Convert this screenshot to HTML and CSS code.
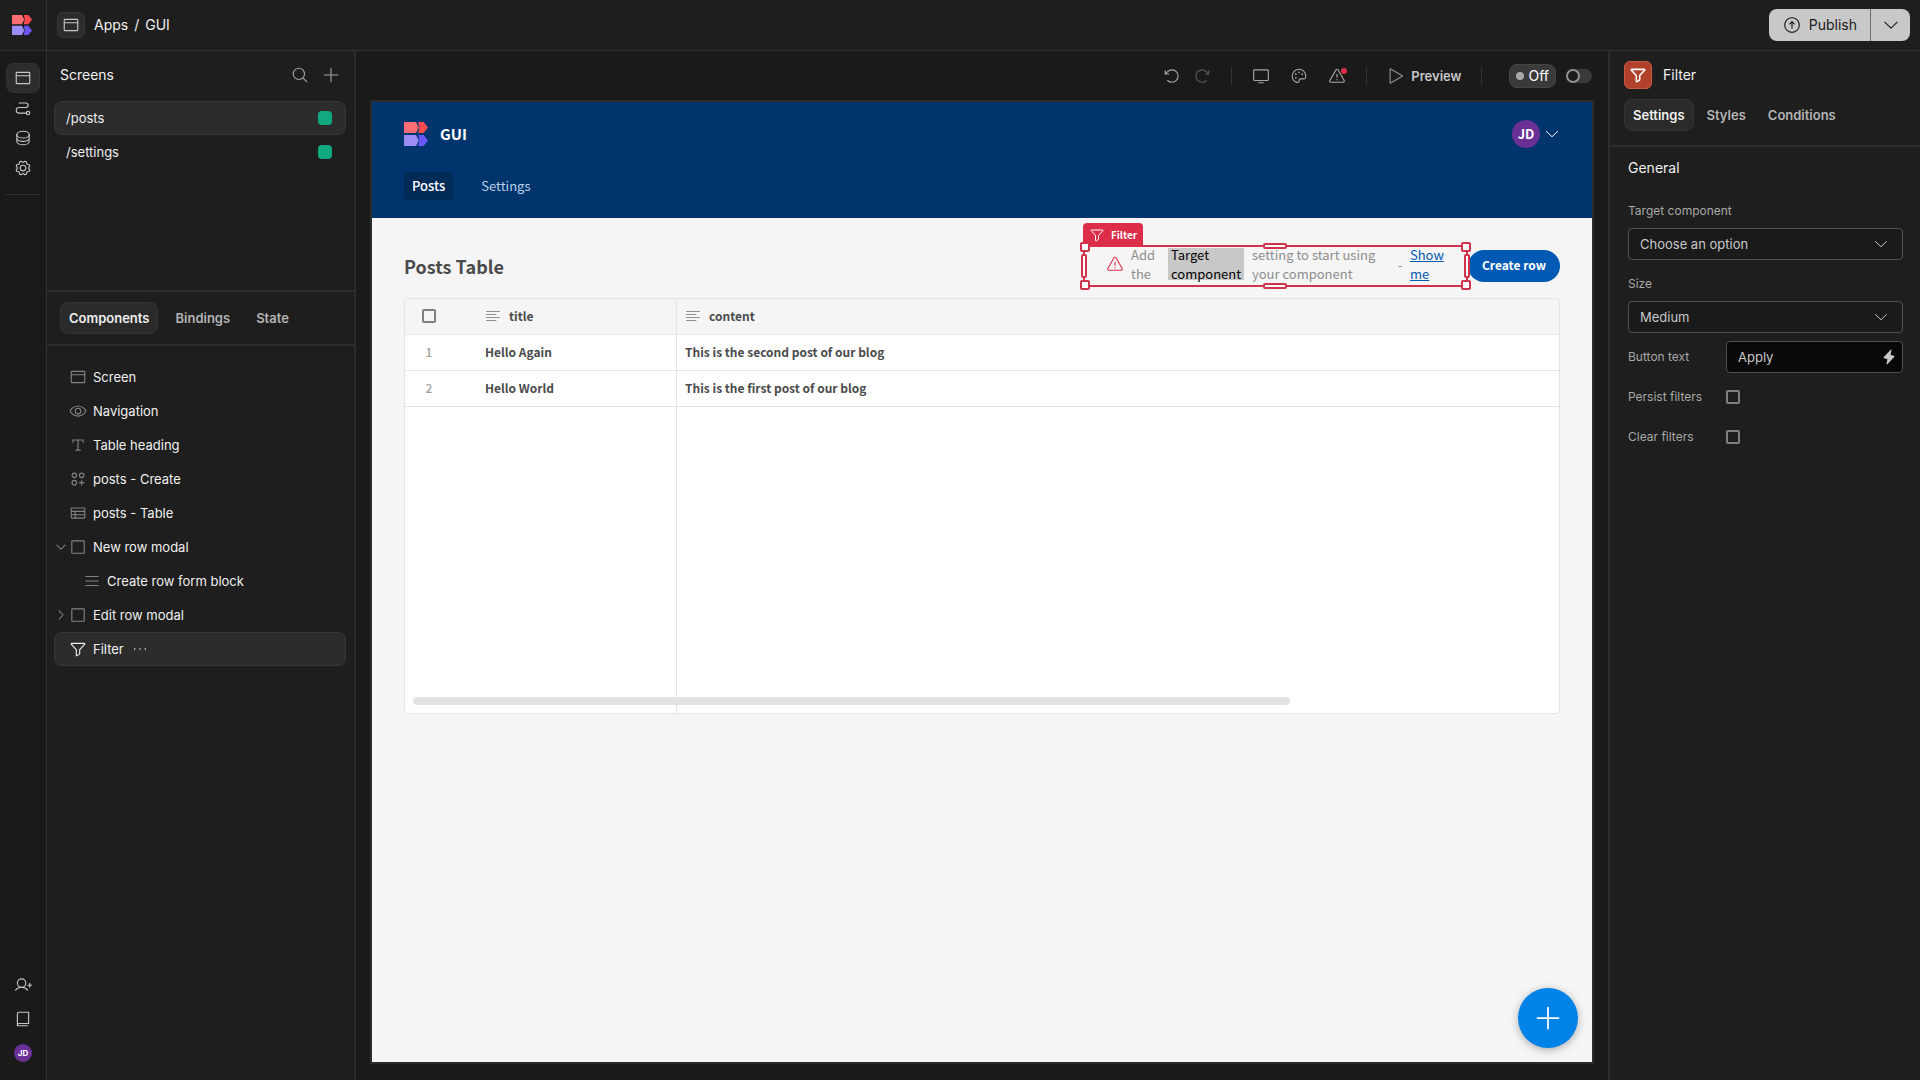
FILE: index.html
```html
<!DOCTYPE html>
<html lang="en">
<head>
  <meta charset="UTF-8" />
  <meta name="viewport" content="width=device-width, initial-scale=1.0"/>
  <title>GUI - Apps</title>
  <link rel="stylesheet" href="styles.css">
</head>
<body>

  <!-- Icon sprite -->
  <svg class="sprite" aria-hidden="true">
    <symbol id="i-logo" viewBox="0 0 22 24" preserveAspectRatio="none">
      <path fill="#ff6e73" stroke="none" d="M0 0h11l2.500 5.500L11 11H0z"/>
      <path fill="#ff4a50" stroke="none" d="M13 0h5l4 5.500-4 5.500h-5l1-5.500z"/>
      <path fill="#9b8df5" stroke="none" d="M0 13h11l2.500 5.500L11 24H0z"/>
      <path fill="#6a56f5" stroke="none" d="M13 13h5l4 5.500-4 5.500h-5l1-5.500z"/>
    </symbol>
    <symbol id="i-browser" viewBox="0 0 256 256"><rect x="32" y="48" width="192" height="160" rx="8"/><path d="M32 96h192"/></symbol>
    <symbol id="i-path" viewBox="0 0 256 256"><circle cx="200" cy="200" r="24"/><path d="M72 56h96a32 32 0 0 1 0 64H72a40 40 0 0 0 0 80h104"/></symbol>
    <symbol id="i-database" viewBox="0 0 256 256"><ellipse cx="128" cy="80" rx="88" ry="48"/><path d="M40 80v48c0 26.500 39.400 48 88 48s88-21.500 88-48V80M40 128v48c0 26.500 39.400 48 88 48s88-21.500 88-48v-48"/></symbol>
    <symbol id="i-gear" viewBox="0 0 256 256"><circle cx="128" cy="128" r="40"/><path d="M41.430 178.090A99.140 99.140 0 0 1 31.360 153.800l16.780-21a81.590 81.590 0 0 1 0-9.640l-16.770-21a99.430 99.430 0 0 1 10.050-24.300l26.710-3a81 81 0 0 1 6.810-6.810l3-26.700A99.140 99.140 0 0 1 102.200 31.360l21 16.780a81.590 81.590 0 0 1 9.640 0l21-16.770a99.430 99.430 0 0 1 24.300 10.050l3 26.710a81 81 0 0 1 6.810 6.810l26.700 3a99.140 99.140 0 0 1 10.070 24.290l-16.780 21a81.590 81.590 0 0 1 0 9.640l16.770 21a99.430 99.430 0 0 1-10 24.300l-26.710 3a81 81 0 0 1-6.810 6.810l-3 26.700a99.140 99.140 0 0 1-24.290 10.070l-21-16.780a81.590 81.590 0 0 1-9.640 0l-21 16.770a99.430 99.430 0 0 1-24.300-10l-3-26.710a81 81 0 0 1-6.810-6.810Z"/></symbol>
    <symbol id="i-search" viewBox="0 0 256 256"><circle cx="112" cy="112" r="80"/><path d="M168.570 168.570 224 224"/></symbol>
    <symbol id="i-plus" viewBox="0 0 256 256"><path d="M32 128h192M128 32v192"/></symbol>
    <symbol id="i-eye" viewBox="0 0 256 256"><path d="M128 56C48 56 16 128 16 128s32 72 112 72 112-72 112-72S208 56 128 56Z"/><circle cx="128" cy="128" r="40"/></symbol>
    <symbol id="i-text" viewBox="0 0 256 256"><path d="M56 88V56h144v32M128 56v144M96 200h64"/></symbol>
    <symbol id="i-circles" viewBox="0 0 256 256"><circle cx="76" cy="76" r="32"/><circle cx="180" cy="76" r="32"/><circle cx="76" cy="180" r="32"/><path d="M180 148v64M148 180h64"/></symbol>
    <symbol id="i-table" viewBox="0 0 256 256"><path d="M32 56h192v136a8 8 0 0 1-8 8H40a8 8 0 0 1-8-8ZM32 104h192M32 152h192M88 104v96"/></symbol>
    <symbol id="i-square" viewBox="0 0 256 256"><rect x="40" y="40" width="176" height="176" rx="6"/></symbol>
    <symbol id="i-list" viewBox="0 0 256 256"><path d="M40 64h176M40 128h176M40 192h176"/></symbol>
    <symbol id="i-funnel" viewBox="0 0 256 256"><path d="M34.100 61.380A8 8 0 0 1 40 48h176a8 8 0 0 1 5.920 13.380L152 136v58.130a8 8 0 0 1-3.560 6.660l-32 21.330A8 8 0 0 1 104 215.460V136Z"/></symbol>
    <symbol id="i-dots" viewBox="0 0 256 256"><g fill="currentColor" stroke="none"><circle cx="44" cy="128" r="12"/><circle cx="128" cy="128" r="12"/><circle cx="212" cy="128" r="12"/></g></symbol>
    <symbol id="i-undo" viewBox="0 0 256 256"><path d="M80 100H32V52M66 192A88 88 0 1 0 65.770 65.770L32 100"/></symbol>
    <symbol id="i-redo" viewBox="0 0 256 256"><path d="M176 100h48V52M190 192a88 88 0 1 1 .230-126.230L224 100"/></symbol>
    <symbol id="i-desktop" viewBox="0 0 256 256"><rect x="24" y="40" width="208" height="152" rx="12"/><path d="M96 224h64"/></symbol>
    <symbol id="i-palette" viewBox="0 0 256 256"><path d="M128 192a24 24 0 0 1 24-24h46.210a24 24 0 0 0 23.410-18.650A96.480 96.480 0 0 0 224 127.170c-.450-52.820-44.160-95.700-97-95.170a96 96 0 0 0-95 97c.5 41 27 77 64.300 90A24 24 0 0 0 128 192Z"/><g fill="currentColor" stroke="none"><circle cx="128" cy="76" r="12"/><circle cx="83" cy="102" r="12"/><circle cx="83" cy="154" r="12"/><circle cx="173" cy="102" r="12"/></g></symbol>
    <symbol id="i-warning" viewBox="0 0 256 256"><path d="M142.410 40.220l87.460 151.870C236 202.790 228.080 216 215.460 216H40.540C27.920 216 20 202.790 26.130 192.090L113.590 40.220c6.300-10.960 22.520-10.960 28.820 0ZM128 104v40"/><circle cx="128" cy="180" r="10" fill="currentColor" stroke="none"/></symbol>
    <symbol id="i-play" viewBox="0 0 256 256"><path d="M44 34v188a6 6 0 0 0 9 5l164-94a6 6 0 0 0 0-10L53 29a6 6 0 0 0-9 5Z"/></symbol>
    <symbol id="i-down" viewBox="0 0 256 256"><path d="m216 88-88 84-88-84"/></symbol>
    <symbol id="i-right" viewBox="0 0 256 256"><path d="m88 40 84 88-84 88"/></symbol>
    <symbol id="i-publish" viewBox="0 0 256 256"><circle cx="128" cy="128" r="104"/><path d="m96 112 32-32 32 32M128 172V80"/></symbol>
    <symbol id="i-user-plus" viewBox="0 0 256 256"><circle cx="108" cy="100" r="60"/><path d="M22 200c20-25 49-40 86-40s66 15 86 40M224 104v56M196 132h56"/></symbol>
    <symbol id="i-book" viewBox="0 0 256 256"><path d="M48 216a24 24 0 0 1 24-24h136V32H72a24 24 0 0 0-24 24ZM48 216v8h144"/></symbol>
    <symbol id="i-bolt" viewBox="0 0 256 256"><path fill="currentColor" stroke="none" d="m213.850 125.460-112 120a8 8 0 0 1-13.690-7l14.660-73.330-57.630-21.640a8 8 0 0 1-3-13l112-120a8 8 0 0 1 13.690 7L153.180 90.900l57.630 21.610a8 8 0 0 1 3 12.950Z"/></symbol>
    <symbol id="i-lines" viewBox="0 0 256 256"><path d="M24 56h208M24 104h152M24 152h208M24 200h152"/></symbol>
  </svg>

  <!-- Left rail -->
  <nav class="rail" aria-label="Main">
    <a class="rail-logo" href="#" aria-label="Home"><svg class="logo-small"><use href="#i-logo"/></svg></a>
    <div class="rail-items">
      <button class="rail-btn active" aria-label="Design"><svg class="icon"><use href="#i-browser"/></svg></button>
      <button class="rail-btn" aria-label="Automations"><svg class="icon"><use href="#i-path"/></svg></button>
      <button class="rail-btn" aria-label="Data"><svg class="icon"><use href="#i-database"/></svg></button>
      <button class="rail-btn" aria-label="App settings"><svg class="icon"><use href="#i-gear"/></svg></button>
    </div>
    <div class="rail-bottom">
      <button class="rail-btn" aria-label="Invite user"><svg class="icon"><use href="#i-user-plus"/></svg></button>
      <button class="rail-btn" aria-label="Docs"><svg class="icon"><use href="#i-book"/></svg></button>
      <button class="avatar small">JD</button>
    </div>
  </nav>

  <div class="app">
    <header class="topbar">
      <button class="app-icon" aria-label="App"><svg class="icon"><use href="#i-browser"/></svg></button>
      <div class="breadcrumbs">
        <a href="#">Apps</a>
        <span>/</span>
        <a href="#">GUI</a>
      </div>
      <div class="publish">
        <button class="publish-main"><svg class="icon"><use href="#i-publish"/></svg>Publish</button>
        <button class="publish-more" aria-label="Publish options"><svg class="icon"><use href="#i-down"/></svg></button>
      </div>
    </header>

    <div class="workspace">
      <!-- Screens and components -->
      <aside class="side">
        <section class="screens">
          <div class="screens-head">
            <h2>Screens</h2>
            <button aria-label="Search"><svg class="icon"><use href="#i-search"/></svg></button>
            <button aria-label="Add screen"><svg class="icon"><use href="#i-plus"/></svg></button>
          </div>
          <button class="screen-row selected">/posts <span class="role"></span></button>
          <button class="screen-row">/settings <span class="role"></span></button>
        </section>

        <div class="tabs">
          <button class="tab active">Components</button>
          <button class="tab">Bindings</button>
          <button class="tab">State</button>
        </div>

        <section class="tree">
          <button class="node"><span class="arrow"></span><svg class="icon"><use href="#i-browser"/></svg>Screen</button>
          <button class="node"><span class="arrow"></span><svg class="icon"><use href="#i-eye"/></svg>Navigation</button>
          <button class="node"><span class="arrow"></span><svg class="icon"><use href="#i-text"/></svg>Table heading</button>
          <button class="node"><span class="arrow"></span><svg class="icon"><use href="#i-circles"/></svg>posts - Create</button>
          <button class="node"><span class="arrow"></span><svg class="icon"><use href="#i-table"/></svg>posts - Table</button>
          <button class="node"><svg class="arrow"><use href="#i-down"/></svg><svg class="icon"><use href="#i-square"/></svg>New row modal</button>
          <button class="node child"><span class="arrow"></span><svg class="icon"><use href="#i-list"/></svg>Create row form block</button>
          <button class="node"><svg class="arrow"><use href="#i-right"/></svg><svg class="icon"><use href="#i-square"/></svg>Edit row modal</button>
          <button class="node selected"><span class="arrow"></span><svg class="icon"><use href="#i-funnel"/></svg>Filter<svg class="more"><use href="#i-dots"/></svg></button>
        </section>
      </aside>

      <!-- Preview -->
      <main class="stage">
        <div class="toolbar">
          <div class="tool-group tight">
            <button aria-label="Undo"><svg class="icon"><use href="#i-undo"/></svg></button>
            <button aria-label="Redo" disabled><svg class="icon"><use href="#i-redo"/></svg></button>
          </div>
          <span class="sep"></span>
          <div class="tool-group">
            <button aria-label="Desktop"><svg class="icon"><use href="#i-desktop"/></svg></button>
            <button aria-label="Theme"><svg class="icon"><use href="#i-palette"/></svg></button>
            <button class="errors" aria-label="Errors"><svg class="icon"><use href="#i-warning"/></svg></button>
          </div>
          <span class="sep"></span>
          <button class="preview-btn"><svg class="icon"><use href="#i-play"/></svg>Preview</button>
          <span class="sep"></span>
          <div class="live">
            <label class="status" for="liveToggle">Off</label>
            <input type="checkbox" class="toggle" id="liveToggle">
          </div>
        </div>

        <div class="frame">
          <header class="site-head">
            <div class="site-brand">
              <svg class="logo-large"><use href="#i-logo"/></svg>
              <span class="site-title">GUI</span>
              <button class="user-menu"><span class="avatar">JD</span><svg class="icon"><use href="#i-down"/></svg></button>
            </div>
            <nav class="site-nav">
              <a class="active" href="#">Posts</a>
              <a href="#">Settings</a>
            </nav>
          </header>

          <div class="site-body">
            <div class="title-row">
              <h1>Posts Table</h1>
              <div class="selection">
                <div class="notice">
                  <svg class="icon"><use href="#i-warning"/></svg>
                  <span class="n-add">Add the</span>
                  <mark>Target component</mark>
                  <span class="n-setting">setting to start using your component</span>
                  <span class="n-dash">-</span>
                  <a href="#">Show me</a>
                </div>
                <div class="outline">
                  <span class="badge"><svg class="icon"><use href="#i-funnel"/></svg>Filter</span>
                  <i class="h tl"></i><i class="h tr"></i><i class="h bl"></i><i class="h br"></i>
                  <i class="h t"></i><i class="h b"></i><i class="h l"></i><i class="h r"></i>
                </div>
              </div>
              <button class="create">Create row</button>
            </div>

            <div class="grid">
              <table>
                <thead>
                  <tr>
                    <th class="num"><input type="checkbox" class="box" aria-label="Select all rows"></th>
                    <th class="title"><span class="col"><svg class="icon"><use href="#i-lines"/></svg>title</span></th>
                    <th><span class="col"><svg class="icon"><use href="#i-lines"/></svg>content</span></th>
                  </tr>
                </thead>
                <tbody>
                  <tr>
                    <td class="num">1</td>
                    <td class="title">Hello Again</td>
                    <td>This is the second post of our blog</td>
                  </tr>
                  <tr>
                    <td class="num">2</td>
                    <td class="title">Hello World</td>
                    <td>This is the first post of our blog</td>
                  </tr>
                  <tr class="filler">
                    <td class="num"></td>
                    <td class="title"></td>
                    <td></td>
                  </tr>
                </tbody>
              </table>
              <div class="scrollbar"></div>
            </div>
          </div>

          <button class="fab" aria-label="Add component"><svg class="icon"><use href="#i-plus"/></svg></button>
        </div>
      </main>

      <!-- Settings -->
      <aside class="props">
        <div class="props-head">
          <span class="tile"><svg class="icon"><use href="#i-funnel"/></svg></span>
          <h2>Filter</h2>
        </div>
        <div class="props-tabs">
          <button class="tab active">Settings</button>
          <button class="tab">Styles</button>
          <button class="tab">Conditions</button>
        </div>
        <form class="props-form">
          <h3>General</h3>
          <div class="stacked">
            <div class="field">
              <label for="target">Target component</label>
              <div class="select">
                <select id="target"><option>Choose an option</option></select>
                <svg class="icon"><use href="#i-down"/></svg>
              </div>
            </div>
            <div class="field">
              <label for="size">Size</label>
              <div class="select">
                <select id="size"><option>Medium</option></select>
                <svg class="icon"><use href="#i-down"/></svg>
              </div>
            </div>
          </div>
          <div class="field inline">
            <label for="buttonText">Button text</label>
            <div class="text-input">
              <input type="text" id="buttonText" value="Apply">
              <svg class="icon"><use href="#i-bolt"/></svg>
            </div>
          </div>
          <div class="field inline">
            <label for="persist">Persist filters</label>
            <input type="checkbox" class="box" id="persist">
          </div>
          <div class="field inline">
            <label for="clear">Clear filters</label>
            <input type="checkbox" class="box" id="clear">
          </div>
        </form>
      </aside>
    </div>
  </div>

</body>
</html>
```
FILE: styles.css
```css
*,
*::before,
*::after {
  box-sizing: border-box;
}

body {
  margin: 0;
  display: flex;
  height: 100vh;
  background: #1a1a1a;
  color: #f0f0f0;
  font-family: Inter, sans-serif;
  font-size: 13px;
  line-height: 18px;
  overflow: hidden;
}

h1, h2, h3 {
  margin: 0;
  font-size: 14px;
  font-weight: 400;
}

button, input, select {
  font: inherit;
  color: inherit;
  margin: 0;
}

button {
  display: flex;
  align-items: center;
  background: none;
  border: none;
  padding: 0;
  cursor: pointer;
}

a {
  color: inherit;
  text-decoration: none;
}

svg {
  fill: none;
  stroke: currentColor;
  stroke-width: 16;
  stroke-linecap: round;
  stroke-linejoin: round;
  flex-shrink: 0;
}

.sprite {
  position: absolute;
  width: 0;
  height: 0;
}

.icon {
  width: 18px;
  height: 18px;
}

/* Left rail */
.rail {
  width: 47px;
  border-right: 1px solid #303030;
  display: flex;
  flex-direction: column;
  align-items: center;
  color: #c6c6c6;
}

.rail-logo {
  align-self: stretch;
  height: 51px;
  padding-right: 2px;
  border-bottom: 1px solid #303030;
  background: #1e1e1e;
  display: flex;
  align-items: center;
  justify-content: center;
}

.logo-small {
  width: 20px;
  height: 20px;
}

.rail-items {
  margin-top: 12px;
  padding-bottom: 11px;
  border-bottom: 1px solid #303030;
}

.rail-btn {
  width: 34px;
  height: 30px;
  justify-content: center;
  border-radius: 8px;
}

.rail-btn.active {
  background: #2c2c2c;
  border: 1px solid #343434;
}

.rail-bottom {
  margin-top: auto;
  padding-bottom: 18px;
  display: flex;
  flex-direction: column;
  align-items: center;
  gap: 4px;
}

.avatar {
  width: 28px;
  height: 28px;
  border-radius: 50%;
  background: #6a3096;
  color: white;
  font-size: 13px;
  font-weight: 700;
  display: flex;
  align-items: center;
  justify-content: center;
}

.avatar.small {
  width: 18px;
  height: 18px;
  margin-top: 6px;
  font-size: 8px;
}

/* Top bar */
.app {
  flex: 1;
  min-width: 0;
  display: flex;
  flex-direction: column;
}

.topbar {
  height: 51px;
  padding: 0 10px;
  border-bottom: 1px solid #303030;
  background: #1e1e1e;
  display: flex;
  align-items: center;
  font-size: 14px;
}

.app-icon {
  width: 28px;
  height: 26px;
  justify-content: center;
  background: #2c2c2c;
  border: 1px solid #363636;
  border-radius: 6px;
  color: #c6c6c6;
}

.breadcrumbs {
  margin-left: 9px;
  display: flex;
  gap: 6px;
}

.publish {
  margin-left: auto;
  height: 32px;
  display: flex;
  border-radius: 8px;
  overflow: hidden;
  background: #c8c8c8;
  color: #1a1a1a;
}

.publish-main {
  padding: 0 13px 0 14px;
  gap: 8px;
  border-right: 1px solid #6e6e6e;
}

.publish-more {
  width: 39px;
  justify-content: center;
}

/* Workspace */
.workspace {
  flex: 1;
  min-height: 0;
  display: flex;
}

.side {
  width: 309px;
  border-right: 2px solid #2c2c2c;
  background: #1e1e1e;
}

.screens {
  height: 241px;
  padding: 7px 8px 7px 7px;
  border-bottom: 2px solid #2c2c2c;
}

.screens-head {
  height: 34px;
  margin-bottom: 9px;
  padding: 0 6px;
  display: flex;
  align-items: center;
  gap: 13px;
  color: #a0a0a0;
}

.screens-head h2 {
  margin-right: auto;
  color: #f0f0f0;
}

.screen-row {
  width: 100%;
  height: 34px;
  padding: 0 13px 0 11px;
  justify-content: space-between;
  border: 1px solid transparent;
  border-radius: 8px;
}

.role {
  width: 14px;
  height: 14px;
  border-radius: 4px;
  background: #12a980;
}

.screen-row.selected,
.node.selected {
  background: #2c2c2c;
  border-color: #383838;
}

.tabs {
  height: 54px;
  padding: 10px 13px;
  border-bottom: 2px solid #2c2c2c;
  display: flex;
  gap: 8px;
}

.tab {
  height: 32px;
  padding: 0 8px;
  border: 1px solid transparent;
  border-radius: 8px;
  color: #b4b4b4;
  font-weight: 600;
}

.tab.active {
  background: #2a2a2a;
  border-color: #343434;
  color: #f0f0f0;
}

.tree {
  padding: 14px 8px 14px 7px;
}

.node {
  width: 100%;
  height: 34px;
  border: 1px solid transparent;
  border-radius: 8px;
}

.node .icon {
  margin-right: 6px;
  color: #828282;
}

.arrow {
  width: 12px;
  height: 12px;
  margin-right: 2px;
  color: #828282;
  stroke-width: 22;
}

.node.child {
  padding-left: 14px;
}

.node.selected .icon {
  color: #f0f0f0;
}

.more {
  width: 16px;
  height: 16px;
  margin-left: 8px;
}

/* Preview */
.stage {
  flex: 1;
  min-width: 0;
  padding: 0 14px 16px;
  display: flex;
  flex-direction: column;
}

.toolbar {
  height: 49px;
  padding-right: 2px;
  display: flex;
  align-items: center;
  justify-content: flex-end;
  gap: 20px;
  color: #a8a8a8;
}

.tool-group {
  display: flex;
  gap: 20px;
}

.tool-group.tight {
  gap: 12px;
}

.tool-group button:disabled {
  color: #5a5a5a;
}

.sep {
  width: 1px;
  height: 18px;
  background: #333;
}

.errors {
  position: relative;
}

.errors::after {
  content: "";
  position: absolute;
  top: 1px;
  right: -1px;
  width: 6px;
  height: 6px;
  border-radius: 50%;
  background: #dc3048;
}

.preview-btn {
  gap: 6px;
  color: #c8c8c8;
  font-weight: 600;
}

.preview-btn .icon {
  color: #909090;
}

.live {
  margin-left: 7px;
  display: flex;
  align-items: center;
  gap: 10px;
}

.status {
  height: 24px;
  padding: 0 6px;
  display: flex;
  align-items: center;
  gap: 4px;
  background: #3a3a3a;
  border: 1px solid #444;
  border-radius: 8px;
  color: white;
  font-size: 14px;
}

.status::before {
  content: "";
  width: 8px;
  height: 8px;
  border-radius: 50%;
  background: #a8a8a8;
}

.toggle {
  appearance: none;
  width: 26px;
  height: 14px;
  border-radius: 7px;
  background: #3a3a3a;
}

.toggle::before {
  content: "";
  display: block;
  width: 14px;
  height: 14px;
  border: 2px solid #909090;
  border-radius: 50%;
  background: #1a1a1a;
}

.frame {
  flex: 1;
  position: relative;
  border: 2px solid #2c2c2c;
  background: #f5f5f5;
  color: #4b4b4b;
  font-family: "Noto Sans CJK SC", sans-serif;
  font-size: 12px;
}

.site-head {
  padding: 18px 32px;
  background: #00346c;
  color: white;
}

.site-brand {
  height: 28px;
  margin-bottom: 24px;
  display: flex;
  align-items: center;
}

.logo-large {
  width: 24px;
  height: 24px;
}

.site-title {
  margin-left: 12px;
  font-size: 15px;
  font-weight: 700;
}

.user-menu {
  margin-left: auto;
  gap: 4px;
}

.user-menu .icon {
  width: 16px;
  height: 16px;
}

.site-nav {
  display: flex;
  gap: 20px;
  font-size: 13px;
}

.site-nav a {
  height: 28px;
  padding: 0 8px;
  display: flex;
  align-items: center;
  border-radius: 4px;
  color: #b8d0ea;
}

.site-nav a.active {
  background: #002b57;
  color: white;
  font-weight: 500;
}

.site-body {
  padding: 27px 32px 0;
}

.title-row {
  height: 42px;
  display: flex;
  align-items: center;
}

.title-row h1 {
  margin-right: auto;
  font-size: 18px;
  font-weight: 700;
}

.selection {
  position: relative;
  width: 385px;
  height: 42px;
  padding: 3px 2px;
}

.notice {
  height: 32px;
  padding-left: 21px;
  display: flex;
  align-items: center;
  font-size: 13px;
  line-height: 19px;
  color: #8e8e8e;
}

.notice > * {
  flex-shrink: 0;
}

.notice .icon {
  margin-right: 7px;
  color: #dc3048;
}

.n-add {
  width: 37px;
}

.notice mark {
  width: 76px;
  height: 32px;
  padding: 0 3px;
  display: flex;
  align-items: center;
  background: #c8c8c8;
  color: black;
}

.n-setting {
  width: 138px;
  margin-left: 8px;
}

.n-dash {
  width: 12px;
  margin-left: 8px;
}

.notice a {
  width: 37px;
  color: #0059b3;
  text-decoration: underline;
}

.outline {
  position: absolute;
  inset: 0;
  border: 2px solid #d0344c;
}

.badge {
  position: absolute;
  left: -2px;
  bottom: 100%;
  height: 24px;
  padding: 0 6px;
  display: flex;
  align-items: center;
  gap: 6px;
  background: #dc2e48;
  border-radius: 4px 4px 0 0;
  color: white;
  font-size: 10px;
  font-weight: 700;
}

.badge .icon {
  width: 16px;
  height: 16px;
}

.h {
  position: absolute;
  width: 10px;
  height: 10px;
  background: white;
  border: 2px solid #d0344c;
  border-radius: 2px;
}

.tl, .bl { left: -5px; }
.tr, .br { right: -5px; }
.tl, .tr { top: -5px; }
.bl, .br { bottom: -5px; }

.t, .b {
  width: 24px;
  height: 6px;
  left: 50%;
  margin-left: -12px;
}

.l, .r {
  width: 6px;
  height: 24px;
  top: 50%;
  margin-top: -12px;
}

.t { top: -4px; }
.b { bottom: -4px; }
.l { left: -4px; }
.r { right: -4px; }

.create {
  height: 32px;
  padding: 0 14px 2px;
  border-radius: 16px;
  background: #0059b3;
  color: white;
  font-weight: 700;
}

.grid {
  position: relative;
  margin-top: 11px;
  height: 416px;
  border: 1px solid #e4e4e4;
  border-radius: 4px;
  background: white;
  overflow: hidden;
}

.grid table {
  width: 100%;
  height: 100%;
  border-collapse: separate;
  border-spacing: 0;
  table-layout: fixed;
}

.grid th,
.grid td {
  height: 36px;
  padding: 0 8px 2px;
  border-bottom: 1px solid #e4e4e4;
  text-align: left;
  font-weight: 700;
}

.grid th {
  background: #f5f5f5;
}

.grid .num {
  width: 48px;
  padding-left: 8px;
  color: #a0a0a0;
  font-weight: 500;
  text-align: center;
}

.grid .title {
  width: 224px;
  padding-left: 32px;
  border-right: 1px solid #e4e4e4;
}

.grid .filler td {
  height: auto;
  border-bottom: none;
}

.col {
  display: flex;
  align-items: center;
  gap: 8px;
}

.col .icon {
  width: 16px;
  height: 16px;
  color: #8e8e8e;
}

.scrollbar {
  position: absolute;
  left: 8px;
  bottom: 8px;
  width: 76%;
  height: 8px;
  border-radius: 4px;
  background: #e2e2e2;
}

.box {
  appearance: none;
  display: block;
  width: 14px;
  height: 14px;
  border: 2px solid #808080;
  border-radius: 2px;
}

.num .box {
  margin: 0 auto;
}

.fab {
  position: absolute;
  right: 14px;
  bottom: 14px;
  width: 60px;
  height: 60px;
  justify-content: center;
  border-radius: 50%;
  background: #0082e6;
  color: white;
  box-shadow: 0 2px 8px rgba(0,0,0,0.3);
}

.fab .icon {
  width: 28px;
  height: 28px;
}

/* Settings panel */
.props {
  width: 312px;
  border-left: 2px solid #2c2c2c;
  background: #1e1e1e;
}

.props-head {
  padding: 10px 14px;
  display: flex;
  align-items: center;
  gap: 11px;
}

.tile {
  width: 28px;
  height: 28px;
  display: flex;
  align-items: center;
  justify-content: center;
  background: #b2412c;
  border: 1px solid #c85a44;
  border-radius: 6px;
  color: white;
}

.tile .icon {
  stroke-width: 22;
}

.props-tabs {
  padding: 0 14px 14px;
  border-bottom: 2px solid #2c2c2c;
  display: flex;
  gap: 4px;
}

.props-form {
  padding: 12px 17px 12px 18px;
  display: grid;
  gap: 8px;
}

.props-form h3 {
  margin-bottom: 17px;
}

.stacked {
  display: grid;
  gap: 15px;
}

.field {
  color: #a8a8a8;
  font-size: 12px;
}

.field label {
  display: block;
}

.select,
.text-input {
  position: relative;
  font-size: 13px;
  color: #c8c8c8;
}

.select {
  margin-top: 8px;
}

.select select,
.text-input input {
  appearance: none;
  display: block;
  width: 100%;
  height: 32px;
  padding: 0 11px;
  background: #1a1a1a;
  border: 1px solid #505050;
  border-radius: 4px;
}

.text-input input {
  background: #080808;
}

.select .icon,
.text-input .icon {
  position: absolute;
  top: 8px;
  right: 14px;
  width: 16px;
  height: 16px;
  pointer-events: none;
}

.text-input .icon {
  right: 6px;
}

.field.inline {
  min-height: 32px;
  display: grid;
  grid-template-columns: 98px 1fr;
  align-items: center;
}
```
